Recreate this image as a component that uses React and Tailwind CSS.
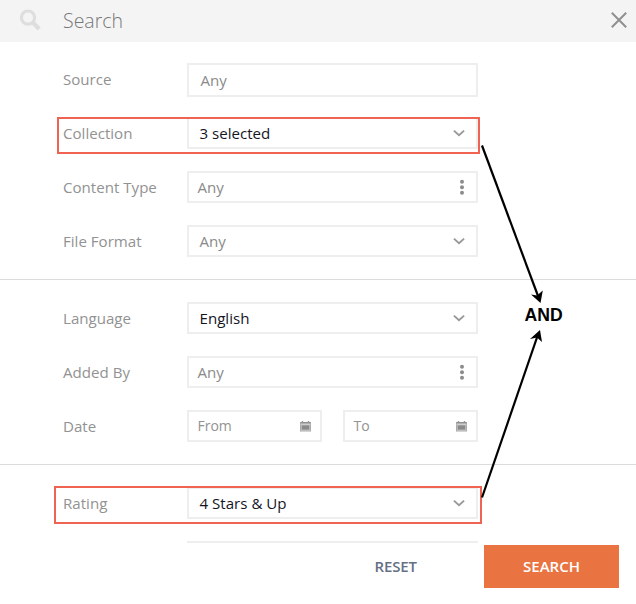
import React from "react";

const ChevronIcon = () => (
  <svg className="mr-[11px] h-3 w-3" viewBox="0 0 12 12" fill="none">
    <path d="M0.9 3.6 L6 8.2 L11.1 3.6" stroke="#999" strokeWidth="1.9" />
  </svg>
);

const DotsIcon = () => (
  <svg className="mr-3 h-4 w-1" viewBox="0 0 4 16" fill="#8c8c8c">
    <circle cx="2" cy="2.7" r="2" />
    <circle cx="2" cy="8.2" r="2" />
    <circle cx="2" cy="13.7" r="2" />
  </svg>
);

const CalendarIcon = () => (
  <svg className="mr-[9px] h-[11px] w-[11px]" viewBox="0 0 11 11">
    <rect x="0" y="1" width="11" height="9.5" fill="#aaa" />
    <rect x="0.5" y="1" width="10" height="1.5" fill="#8f8f8f" />
    <rect x="0.6" y="2.7" width="9.8" height="0.9" fill="#e2e2e2" />
    <rect x="1" y="3.6" width="9" height="6" fill="#d0d0d0" />
    <rect x="1.6" y="4.3" width="7.8" height="4.4" fill="#8a8a8a" />
    <rect x="1.8" y="0" width="1.4" height="1.4" fill="#999" />
    <rect x="7.8" y="0" width="1.4" height="1.4" fill="#999" />
  </svg>
);

const SearchIcon = () => (
  <svg className="ml-[19px] h-[23px] w-[23px]" viewBox="0 0 23 23" fill="none" stroke="#dedede">
    <circle cx="9" cy="8.6" r="6.6" strokeWidth="3.2" />
    <path d="M13.5 13.2 L20.2 20" strokeWidth="4.4" />
  </svg>
);

const Row = ({ label, children }) => (
  <div className="flex h-[54px] items-start">
    <div className="w-[124px] text-[15.1px] leading-8 text-[#929292]">{label}</div>
    {children}
  </div>
);

const Select = ({ value, filled }) => (
  <div className="flex h-8 w-[291px] items-center justify-between border-2 border-[#eee] pl-[10.5px]">
    <span className={filled ? "text-[15.1px] leading-8 text-[#15151f]" : "text-[15.1px] leading-8 text-[#8a8a8a]"}>
      {value}
    </span>
    <ChevronIcon />
  </div>
);

const Picker = ({ value }) => (
  <div className="flex h-8 w-[291px] items-center justify-between border-2 border-[#eee] pl-[8.5px]">
    <span className="text-[15.1px] leading-8 text-[#8a8a8a]">{value}</span>
    <DotsIcon />
  </div>
);

const DateField = ({ value }) => (
  <div className="flex h-8 w-[135px] items-center justify-between border-2 border-[#eee] pl-[8.5px]">
    <span className="text-sm leading-8 text-[#929292]">{value}</span>
    <CalendarIcon />
  </div>
);

const App = () => {
  return (
    <div className="relative h-[604px] w-[636px] overflow-hidden bg-white font-['Open_Sans','Noto_Sans',sans-serif]">
      <header className="flex h-[42px] items-center bg-[#f4f4f4] pb-0.5">
        <SearchIcon />
        <h1 className="ml-[21px] flex-1 pt-0.5 text-[19.5px] font-[330] text-[#777]">Search</h1>
        <svg className="mr-[9px] h-4 w-4" viewBox="0 0 16 16" fill="none">
          <path d="M0.8 0.8 L15.2 15.2 M15.2 0.8 L0.8 15.2" stroke="#8f8f8f" strokeWidth="2" />
        </svg>
      </header>

      <main className="h-[501px] overflow-hidden">
        <section className="pl-[63px] pt-[21px]">
          <Row label="Source">
            <div className="h-[34px] w-[291px] border-2 border-[#eee] pl-[11.5px] text-[15.1px] leading-[30px] text-[#8a8a8a]">
              Any
            </div>
          </Row>
          <Row label="Collection">
            <Select value="3 selected" filled />
          </Row>
          <Row label="Content Type">
            <Picker value="Any" />
          </Row>
          <Row label="File Format">
            <Select value="Any" />
          </Row>
        </section>

        <section className="border-t border-[#dcdcdc] pl-[63px] pt-[22px]">
          <Row label="Language">
            <Select value="English" filled />
          </Row>
          <Row label="Added By">
            <Picker value="Any" />
          </Row>
          <Row label="Date">
            <div className="flex gap-[21px]">
              <DateField value="From" />
              <DateField value="To" />
            </div>
          </Row>
        </section>

        <section className="border-t border-[#dcdcdc] pl-[63px] pt-[22px]">
          <Row label="Rating">
            <Select value="4 Stars & Up" filled />
          </Row>
          <Row label="">
            <Select value="" />
          </Row>
        </section>
      </main>

      <footer className="flex items-start justify-end pr-[17px] pt-[1.5px]">
        <button className="mr-[67px] h-[43px] text-[15px] font-semibold tracking-[-0.1px] text-[#667085]">RESET</button>
        <button className="h-[43px] w-[135px] bg-[#e97442] text-[15px] font-semibold text-white">SEARCH</button>
      </footer>

      {/* callouts over the form */}
      <div className="absolute left-[57px] top-[117px] h-[37px] w-[423px] border-2 border-[#ee6352]" />
      <div className="absolute left-[54px] top-[486px] h-[38px] w-[428px] border-2 border-[#ee6352]" />
      <svg className="absolute left-0 top-0 h-[604px] w-[636px]" viewBox="0 0 636 604">
        <path d="M482 145.5 L538 296" stroke="#000" strokeWidth="2.2" />
        <path d="M540.5 303 L531 294.5 L537 295.5 L542.8 290.5 Z" />
        <path d="M482 497.5 L537.5 336" stroke="#000" strokeWidth="2.2" />
        <path d="M540 330 L530 339 L537 337.5 L542 342 Z" />
      </svg>
      <div className="absolute left-[524.5px] top-[304px] font-['Liberation_Sans',sans-serif] text-[17.6px] font-bold leading-[22px] text-black">
        AND
      </div>
    </div>
  );
};

export default App;
